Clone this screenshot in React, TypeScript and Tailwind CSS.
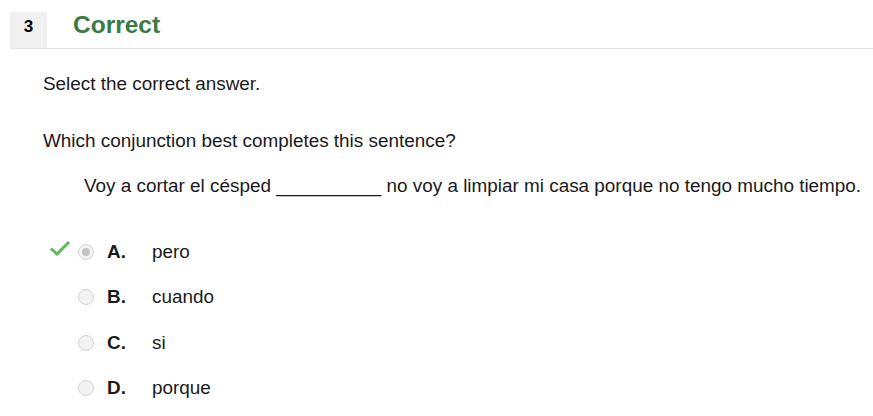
const options = [
  { letter: 'A.', text: 'pero', selected: true },
  { letter: 'B.', text: 'cuando', selected: false },
  { letter: 'C.', text: 'si', selected: false },
  { letter: 'D.', text: 'porque', selected: false },
];

function Radio({ selected }: { selected: boolean }) {
  return (
    <span className="flex h-[16px] w-[16px] items-center justify-center rounded-full border border-[#d4d4d4] bg-[#f3f3f3]">
      {selected && <span className="h-[8px] w-[8px] rounded-full bg-[#c4c4c4]" />}
    </span>
  );
}

export default function App() {
  return (
    <div className="min-h-[416px] w-[873px] bg-white font-['Liberation_Sans',Arial,sans-serif] text-[#1a1a1a]">
      <div className="ml-[10px] flex items-start border-b border-[#e4e4e4] pt-[10px]">
        <div className="mt-[2px] h-[36px] w-[37px] bg-[#f0f0f0] pt-[5px] text-center text-[17px] leading-[20px] font-bold text-black">3</div>
        <h2 className="ml-[26px] text-[24.5px] leading-[30px] font-bold text-[#3b7a45]">Correct</h2>
      </div>

      <div className="pl-[43px] text-[18.9px] leading-[24px]">
        <p className="mt-[23px]">Select the correct answer.</p>
        <p className="mt-[33px]">Which conjunction best completes this sentence?</p>
        <p className="mt-[21px] pl-[41px]">Voy a cortar el césped __________ no voy a limpiar mi casa porque no tengo mucho tiempo.</p>

        <ul className="mt-[44px] flex flex-col gap-[25.33px]">
          {options.map((o) => (
            <li key={o.letter} className="relative flex h-[20px] items-center pl-[35px]">
              {o.selected && (
                <svg className="absolute left-[6px] top-[-3px]" width="22" height="18" viewBox="0 0 22 18">
                  <path d="M2 9.5 L8 15 L20 3" fill="none" stroke="#5cb85c" strokeWidth="3" />
                </svg>
              )}
              <Radio selected={o.selected} />
              <span className="ml-[13px] w-[45px] font-bold">{o.letter}</span>
              <span>{o.text}</span>
            </li>
          ))}
        </ul>
      </div>
    </div>
  );
}
